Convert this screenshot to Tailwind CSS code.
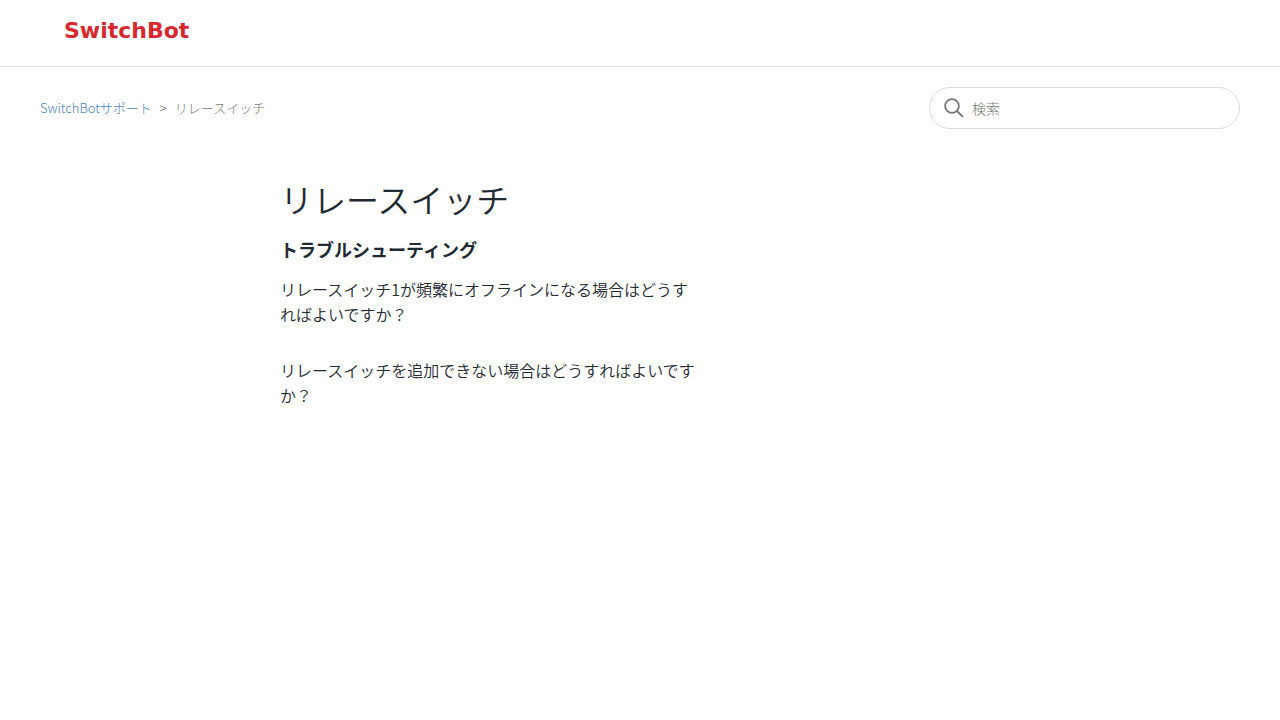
<!DOCTYPE html>
<html lang="ja">
<head>
  <meta charset="UTF-8">
  <meta name="viewport" content="width=device-width, initial-scale=1.0">
  <title>リレースイッチ – SwitchBotサポート</title>
  <script src="https://cdn.jsdelivr.net/npm/@tailwindcss/browser@4"></script>
</head>
<body class="min-h-screen bg-white font-['Noto_Sans_CJK_JP',sans-serif] text-[#1f2a33]">
  <!-- Header -->
  <header class="flex h-[67px] items-start border-b border-[#e0e0e0] px-16 pt-3">
    <a href="#" class="font-['DejaVu_Sans',sans-serif] text-[22px] leading-[38px] font-bold text-[#d7282f]">SwitchBot</a>
  </header>

  <main class="px-10 pt-5">
    <!-- Breadcrumbs and search -->
    <div class="flex items-center justify-between">
      <nav aria-label="breadcrumb">
        <ol class="flex items-center gap-2 text-[13px] font-light">
          <li><a href="#" class="text-[#4a7fb5] hover:underline">SwitchBotサポート</a></li>
          <li aria-hidden="true" class="text-[#666]">&gt;</li>
          <li class="text-[#777]">リレースイッチ</li>
        </ol>
      </nav>
      <form role="search" class="flex h-[42px] w-[311px] items-center gap-2 rounded-full border border-[#ddd] pl-[14px] pr-4">
        <svg class="size-5 shrink-0 text-[#777]" viewBox="0 0 20 20" fill="none" stroke="currentColor" stroke-width="1.8" stroke-linecap="round" aria-hidden="true">
          <circle cx="8" cy="8" r="6.9" />
          <path d="M13 13L18.4 18.4" />
        </svg>
        <input type="search" placeholder="検索" aria-label="検索" class="w-full min-w-0 bg-transparent text-[14px] leading-5 font-light outline-none placeholder:text-[#777]">
      </form>
    </div>

    <!-- Section list -->
    <section class="mx-auto mt-12 max-w-[720px]">
      <h1 class="text-[33px] leading-11 font-[350]">リレースイッチ</h1>
      <h2 class="mt-4 text-[18px] leading-6 font-bold">トラブルシューティング</h2>
      <ul class="mt-4 max-w-[420px] space-y-[31px] text-[16px] leading-[25px] font-[350]">
        <li><a href="#" class="hover:underline">リレースイッチ1が頻繁にオフラインになる場合はどうすればよいですか？</a></li>
        <li><a href="#" class="hover:underline">リレースイッチを追加できない場合はどうすればよいですか？</a></li>
      </ul>
    </section>
  </main>
</body>
</html>
